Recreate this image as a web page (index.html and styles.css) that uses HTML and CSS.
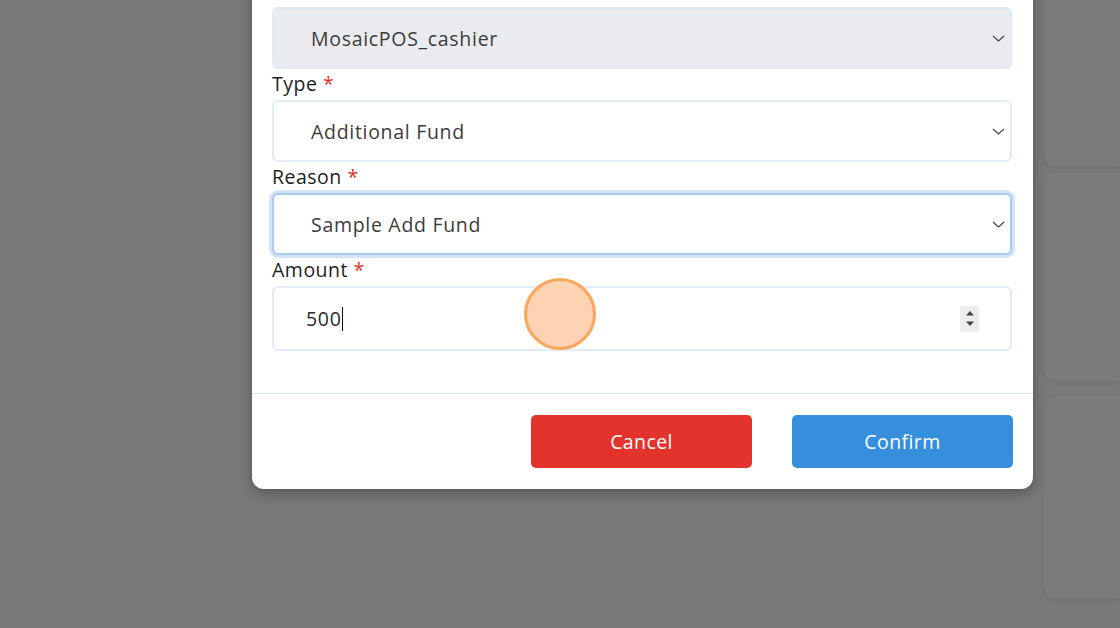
FILE: index.html
```html
<!DOCTYPE html>
<html lang="en">
<head>
    <meta charset="UTF-8">
    <meta name="viewport" content="width=device-width, initial-scale=1.0">
    <title>Cash Fund</title>
    <link rel="stylesheet" href="styles.css">
</head>
<body>
    <div class="page">
        <div class="side">
            <div class="card card-top"></div>
            <div class="card card-mid"></div>
            <div class="card card-low"></div>
        </div>
    </div>

    <div class="modal">
        <div class="modal-body">
            <div class="select readonly">
                <span>MosaicPOS_cashier</span>
                <svg class="chevron" width="13" height="7" viewBox="0 0 13 7"><path d="M1 1l5.5 5 5.5-5" fill="none" stroke="#444" stroke-width="1.2"/></svg>
            </div>

            <label class="label">Type <b>*</b></label>
            <div class="select">
                <span>Additional Fund</span>
                <svg class="chevron" width="13" height="7" viewBox="0 0 13 7"><path d="M1 1l5.5 5 5.5-5" fill="none" stroke="#444" stroke-width="1.2"/></svg>
            </div>

            <label class="label">Reason <b>*</b></label>
            <div class="select focused">
                <span>Sample Add Fund</span>
                <svg class="chevron" width="13" height="7" viewBox="0 0 13 7"><path d="M1 1l5.5 5 5.5-5" fill="none" stroke="#444" stroke-width="1.2"/></svg>
            </div>

            <label class="label">Amount <b>*</b></label>
            <div class="input">
                <span class="value">500</span><span class="caret"></span>
                <div class="spinner">
                    <svg width="10" height="6" viewBox="0 0 10 6"><path d="M1 5.5L5 1l4 4.5z" fill="#444"/></svg>
                    <svg width="10" height="6" viewBox="0 0 10 6"><path d="M1 .5L5 5l4-4.5z" fill="#444"/></svg>
                </div>
            </div>
        </div>
        <div class="modal-footer">
            <button class="btn btn-cancel">Cancel</button>
            <button class="btn btn-confirm">Confirm</button>
        </div>
    </div>

    <div class="click-dot"></div>
</body>
</html>
```

FILE: styles.css
```css
body {
    margin: 0;
    width: 1120px;
    height: 628px;
    overflow: hidden;
    background-color: #797979;
    font-family: "Open Sans", "Noto Sans", sans-serif;
    color: #3c3c3c;
}
.page {
    display: flex;
    justify-content: flex-end;
    height: 628px;
}
.side {
    width: 76px;
    display: flex;
    flex-direction: column;
    gap: 7px;
    margin-top: -40px;
}
.card {
    background-color: #7b7b7b;
    border-radius: 12px 0 0 12px;
    box-shadow: 0 2px 6px rgba(0, 0, 0, 0.08);
}
.card-top { height: 206px; }
.card-mid { height: 208px; }
.card-low { height: 202px; margin-top: 8px; }

.modal {
    position: absolute;
    left: 252px;
    top: -40px;
    width: 781px;
    background-color: #fff;
    border-radius: 0 0 12px 12px;
    box-shadow: 0 4px 14px rgba(0, 0, 0, 0.3);
}
.modal-body {
    padding: 47px 21px 42px 20px;
    display: flex;
    flex-direction: column;
}
.label {
    height: 31px;
    line-height: 29px;
    font-size: 19.5px;
    letter-spacing: 0.5px;
    color: #1e1e1e;
}
.label b {
    color: #e0302a;
    font-weight: normal;
}
.select, .input {
    height: 62px;
    box-sizing: border-box;
    border: 2px solid #e2ecf9;
    border-radius: 6px;
    display: flex;
    align-items: center;
    padding: 0 4px 0 37px;
    font-size: 19.5px;
    letter-spacing: 0.7px;
    background-color: #fff;
}
.select span {
    flex: 1;
}
.select.readonly {
    background-color: #e9ebef;
    border-color: #e0eaf7;
}
.select.focused {
    border-color: #a9cbf0;
    box-shadow: 0 0 0 3px #d3e4f8;
}
.chevron {
    margin-right: 1px;
}
.input {
    height: 65px;
    padding-left: 32px;
    padding-right: 31px;
}
.input .value {
    color: #2a2a2a;
}
.caret {
    width: 1px;
    height: 24px;
    background-color: #111;
    margin-right: auto;
}
.spinner {
    width: 19px;
    height: 26px;
    background-color: #ededed;
    display: flex;
    flex-direction: column;
    align-items: center;
    justify-content: center;
    gap: 5px;
}
.modal-footer {
    border-top: 1px solid #d5e5ef;
    padding: 21px 20px 21px 0;
    display: flex;
    justify-content: flex-end;
    gap: 40px;
}
.btn {
    width: 221px;
    height: 53px;
    border: none;
    border-radius: 5px;
    color: #fff;
    font-family: "Open Sans", "Noto Sans", sans-serif;
    font-size: 19.5px;
    letter-spacing: 0.4px;
    cursor: pointer;
}
.btn-cancel {
    background-color: #e2342d;
}
.btn-confirm {
    background-color: #358fdd;
}
.click-dot {
    position: absolute;
    left: 524px;
    top: 278px;
    width: 66px;
    height: 66px;
    border-radius: 50%;
    background-color: #fdd3b4;
    border: 3px solid #fba65c;
}
```
